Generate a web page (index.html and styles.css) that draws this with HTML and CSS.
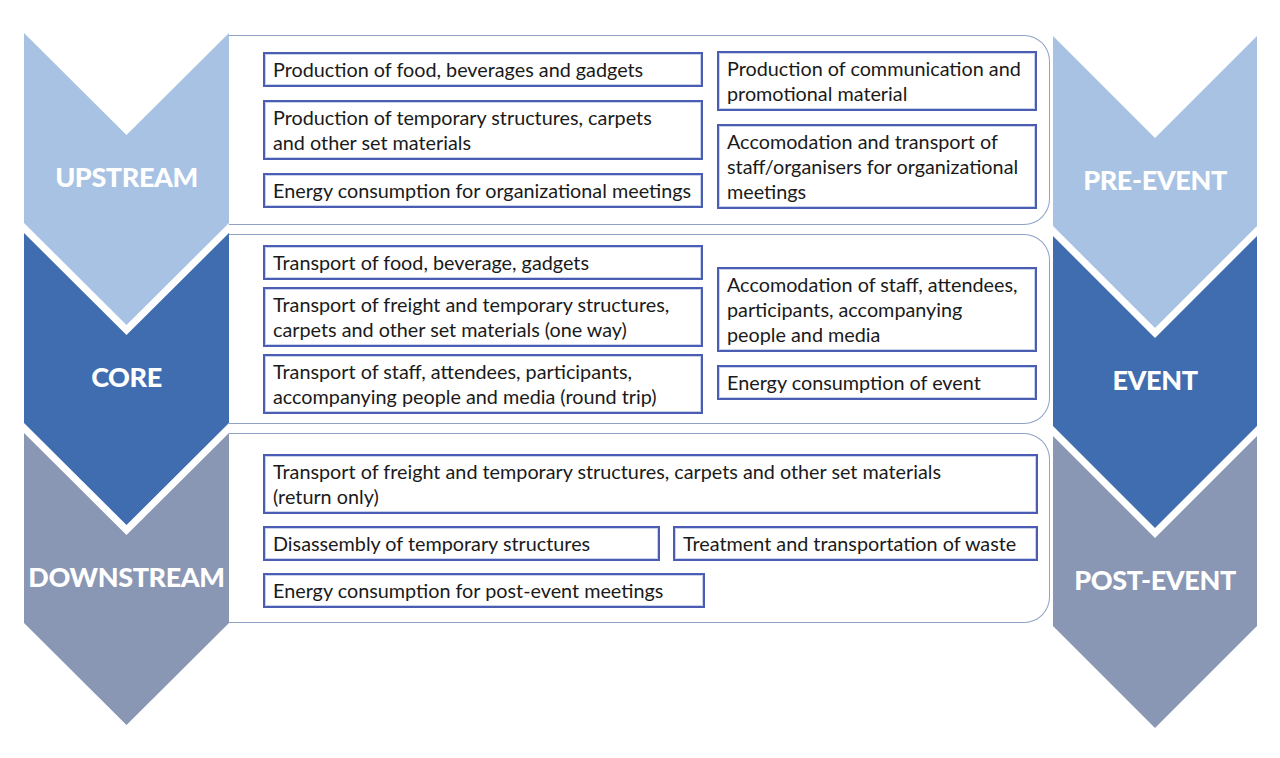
FILE: index.html
```html
<!DOCTYPE html>
<html>
<head>
<meta charset="utf-8">
<link rel="stylesheet" href="styles.css">
</head>
<body>
<div class="diagram">
  <div class="chev-col left">
    <div class="chev up"><span>UPSTREAM</span></div>
    <div class="chev core"><span>CORE</span></div>
    <div class="chev down"><span>DOWNSTREAM</span></div>
  </div>

  <div class="panels">
    <div class="panel p1">
      <div class="col lcol">
        <div class="box">Production of food, beverages and gadgets</div>
        <div class="box">Production of temporary structures, carpets<br>and other set materials</div>
        <div class="box">Energy consumption for organizational meetings</div>
      </div>
      <div class="col rcol">
        <div class="box">Production of communication and<br>promotional material</div>
        <div class="box">Accomodation and transport of<br>staff/organisers for organizational<br>meetings</div>
      </div>
    </div>

    <div class="panel p2">
      <div class="col lcol tight">
        <div class="box">Transport of food, beverage, gadgets</div>
        <div class="box">Transport of freight and temporary structures,<br>carpets and other set materials (one way)</div>
        <div class="box">Transport of staff, attendees, participants,<br>accompanying people and media (round trip)</div>
      </div>
      <div class="col rcol shift">
        <div class="box">Accomodation of staff, attendees,<br>participants, accompanying<br>people and media</div>
        <div class="box">Energy consumption of event</div>
      </div>
    </div>

    <div class="panel p3">
      <div class="stack">
        <div class="box">Transport of freight and temporary structures, carpets and other set materials<br>(return only)</div>
        <div class="row">
          <div class="box dis">Disassembly of temporary structures</div>
          <div class="box treat">Treatment and transportation of waste</div>
        </div>
        <div class="box energy">Energy consumption for post-event meetings</div>
      </div>
    </div>
  </div>

  <div class="chev-col right">
    <div class="chev up"><span>PRE-EVENT</span></div>
    <div class="chev core"><span>EVENT</span></div>
    <div class="chev down"><span>POST-EVENT</span></div>
  </div>
</div>
</body>
</html>
```

FILE: styles.css
```css
* { box-sizing: border-box; }

html, body {
  margin: 0;
  padding: 0;
  background: #ffffff;
}

body {
  width: 1280px;
  height: 758px;
  overflow: hidden;
  font-family: Lato, "Open Sans", "Liberation Sans", sans-serif;
  color: #1a1a1a;
}

.diagram {
  display: flex;
  align-items: flex-start;
  padding-left: 24px;
}

/* chevrons */
.chev-col {
  display: flex;
  flex-direction: column;
}

.chev-col.left {
  width: 205px;
  padding-top: 33px;
}

.chev-col.right {
  width: 204px;
  padding-top: 36px;
  margin-left: 3px;
}

.chev {
  height: 292px;
  margin-bottom: -92px;
  clip-path: polygon(0 0, 50% 102px, 100% 0, 100% 190px, 50% 100%, 0 190px);
  display: flex;
  align-items: center;
  justify-content: center;
  padding-bottom: 5px;
}

.chev span {
  color: #ffffff;
  font-family: Lato, "Open Sans", sans-serif;
  font-weight: 900;
  font-size: 27px;
  letter-spacing: -0.4px;
}

.chev.up { background: #a7c2e3; }
.chev.core { background: #3f6db0; }
.chev.down { background: #8996b4; }

/* panels */
.panels {
  width: 821px;
  padding-top: 35px;
  display: flex;
  flex-direction: column;
  gap: 9px;
}

.panel {
  height: 190px;
  border: 1.5px solid #8fa2c6;
  border-left: none;
  border-radius: 0 26px 26px 0;
  padding: 0 12px 0 34px;
  display: flex;
  align-items: center;
  gap: 14px;
}

.col {
  display: flex;
  flex-direction: column;
  gap: 13px;
}

.lcol { width: 440px; }
.rcol { width: 320px; }

.lcol.tight { gap: 7px; }
.rcol.shift { margin-top: 8px; gap: 13px; }

.box {
  border: 2px solid #4a5db3;
  background: #ffffff;
  padding: 3px 8px 3px 8px;
  font-size: 19.8px;
  line-height: 25px;
  white-space: nowrap;
  box-shadow: inset 0 0 0 1px #c9d2ec;
}

.stack {
  width: 775px;
  display: flex;
  flex-direction: column;
  gap: 12px;
  margin-top: 6px;
}

.row {
  display: flex;
  gap: 13px;
}

.dis { width: 397px; }
.treat { width: 365px; }
.energy { width: 442px; }
```
